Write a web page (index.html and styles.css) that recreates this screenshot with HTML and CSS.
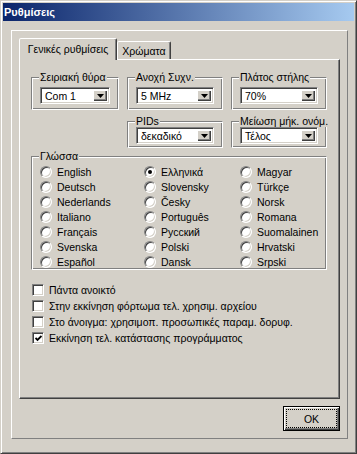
FILE: index.html
```html
<!DOCTYPE html>
<html lang="el">
<head>
    <meta charset="UTF-8">
    <meta name="viewport" content="width=device-width, initial-scale=1.0">
    <title>Ρυθμίσεις</title>
    <link rel="stylesheet" href="styles.css">
</head>
<body>
    <div class="window">
        <div class="titlebar">
            <span class="title">Ρυθμίσεις</span>
        </div>
        <div class="frame">
            <div class="tabs">
                <div class="tab tab-active">Γενικές ρυθμίσεις</div>
                <div class="tab tab-second">Χρώματα</div>
            </div>
            <div class="panel">
                <div class="group-grid">
                    <fieldset class="group">
                        <legend>Σειριακή θύρα</legend>
                        <div class="combo">
                            <span class="combo-value">Com 1</span>
                            <span class="combo-btn"><svg width="7" height="4" viewBox="0 0 7 4"><polygon points="0,0 7,0 3.5,4" fill="#000"/></svg></span>
                        </div>
                    </fieldset>
                    <fieldset class="group">
                        <legend>Ανοχή Συχν.</legend>
                        <div class="combo">
                            <span class="combo-value">5 MHz</span>
                            <span class="combo-btn"><svg width="7" height="4" viewBox="0 0 7 4"><polygon points="0,0 7,0 3.5,4" fill="#000"/></svg></span>
                        </div>
                    </fieldset>
                    <fieldset class="group">
                        <legend>Πλάτος στήλης</legend>
                        <div class="combo">
                            <span class="combo-value">70%</span>
                            <span class="combo-btn"><svg width="7" height="4" viewBox="0 0 7 4"><polygon points="0,0 7,0 3.5,4" fill="#000"/></svg></span>
                        </div>
                    </fieldset>

                    <div class="group-empty"></div>
                    <fieldset class="group group-tight">
                        <legend>PIDs</legend>
                        <div class="combo">
                            <span class="combo-value">δεκαδικό</span>
                            <span class="combo-btn"><svg width="7" height="4" viewBox="0 0 7 4"><polygon points="0,0 7,0 3.5,4" fill="#000"/></svg></span>
                        </div>
                    </fieldset>
                    <fieldset class="group group-tight">
                        <legend>Μείωση μήκ. ονόμ.</legend>
                        <div class="combo">
                            <span class="combo-value">Τέλος</span>
                            <span class="combo-btn"><svg width="7" height="4" viewBox="0 0 7 4"><polygon points="0,0 7,0 3.5,4" fill="#000"/></svg></span>
                        </div>
                    </fieldset>
                </div>

                <fieldset class="group group-lang">
                    <legend>Γλώσσα</legend>
                    <div class="lang-grid">
                        <div class="option"><span class="radio"></span>English</div>
                        <div class="option"><span class="radio"></span>Deutsch</div>
                        <div class="option"><span class="radio"></span>Nederlands</div>
                        <div class="option"><span class="radio"></span>Italiano</div>
                        <div class="option"><span class="radio"></span>Français</div>
                        <div class="option"><span class="radio"></span>Svenska</div>
                        <div class="option"><span class="radio"></span>Español</div>

                        <div class="option"><span class="radio radio-on"></span>Ελληνικά</div>
                        <div class="option"><span class="radio"></span>Slovensky</div>
                        <div class="option"><span class="radio"></span>Česky</div>
                        <div class="option"><span class="radio"></span>Português</div>
                        <div class="option"><span class="radio"></span>Русский</div>
                        <div class="option"><span class="radio"></span>Polski</div>
                        <div class="option"><span class="radio"></span>Dansk</div>

                        <div class="option"><span class="radio"></span>Magyar</div>
                        <div class="option"><span class="radio"></span>Türkçe</div>
                        <div class="option"><span class="radio"></span>Norsk</div>
                        <div class="option"><span class="radio"></span>Romana</div>
                        <div class="option"><span class="radio"></span>Suomalainen</div>
                        <div class="option"><span class="radio"></span>Hrvatski</div>
                        <div class="option"><span class="radio"></span>Srpski</div>
                    </div>
                </fieldset>

                <div class="checks">
                    <div class="option check-row"><span class="check"></span>Πάντα ανοικτό</div>
                    <div class="option check-row"><span class="check"></span>Στην εκκίνηση φόρτωμα τελ. χρησιμ. αρχείου</div>
                    <div class="option check-row"><span class="check"></span>Στο άνοιγμα: χρησιμοπ. προσωπικές παραμ. δορυφ.</div>
                    <div class="option check-row">
                        <span class="check"><svg width="7" height="7" viewBox="0 0 7 7"><polyline points="0.5,3 2.5,5 6.5,1" fill="none" stroke="#000" stroke-width="1.8"/></svg></span>
                        Εκκίνηση τελ. κατάστασης προγράμματος
                    </div>
                </div>
            </div>
            <div class="actions">
                <button type="button" class="btn-ok">OK</button>
            </div>
        </div>
    </div>
</body>
</html>
```

FILE: styles.css
```css
:root {
    --face: #d4d0c8;
    --shadow: #808080;
    --dark: #404040;
    --light: #ffffff;
    --ui-font: "Liberation Sans", Arial, sans-serif;
}

body {
    margin: 0;
    padding: 0;
    background-color: var(--face);
    font-family: var(--ui-font);
    font-size: 10.5px;
    color: #000;
}

.window {
    width: 357px;
    height: 454px;
    box-sizing: border-box;
    border: 1px solid;
    border-color: var(--face) var(--dark) var(--dark) var(--face);
    box-shadow: inset 1px 1px var(--light), inset -1px -1px var(--shadow);
    padding: 2px;
    background-color: var(--face);
    display: flex;
    flex-direction: column;
}

.titlebar {
    height: 18px;
    flex-shrink: 0;
    display: flex;
    align-items: center;
    padding-left: 1px;
    background: linear-gradient(to right, #0a246a, #a6caf0);
}

.title {
    color: var(--light);
    font-weight: bold;
    font-size: 11px;
}

.frame {
    margin: 9px 6px 0 8px;
    border: 1px solid;
    border-color: var(--light) var(--shadow) var(--shadow) var(--light);
    padding: 7px;
}

/* tab strip */
.tabs {
    display: flex;
    align-items: flex-end;
    height: 22px;
    margin-bottom: -1px;
    position: relative;
    z-index: 1;
}

.tab {
    box-sizing: border-box;
    display: flex;
    align-items: center;
    justify-content: center;
    border: 1px solid;
    border-bottom: none;
    border-color: var(--light) var(--dark) transparent var(--light);
    border-radius: 2px 2px 0 0;
    box-shadow: inset -1px 0 var(--shadow);
    background-color: var(--face);
    white-space: nowrap;
}

.tab-active {
    width: 98px;
    height: 22px;
    padding-bottom: 1px;
}

.tab-second {
    width: 54px;
    height: 18px;
    margin-bottom: 1px;
}

.panel {
    box-sizing: border-box;
    height: 340px;
    border: 1px solid;
    border-color: var(--light) var(--dark) var(--dark) var(--light);
    box-shadow: inset -1px -1px var(--shadow);
    padding: 11px 12px 0 11px;
}

/* group boxes */
.group-grid {
    display: grid;
    grid-template-columns: 88px 96px 96px;
    column-gap: 8px;
    row-gap: 5px;
}

.group {
    margin: 0;
    min-width: 0;
    border: 1px solid;
    border-color: var(--shadow) var(--light) var(--light) var(--shadow);
    box-shadow: inset 1px 1px var(--light), inset -1px -1px var(--shadow);
    padding: 4px 8px 5px 8px;
}

.group legend {
    padding: 0 1px;
    margin-left: -1px;
    line-height: 12px;
    white-space: nowrap;
    background-color: var(--face);
}

.group-tight {
    padding-top: 0;
    padding-bottom: 3px;
}

.combo {
    box-sizing: border-box;
    height: 17px;
    display: flex;
    align-items: stretch;
    padding: 2px;
    border: 1px solid;
    border-color: var(--shadow) var(--light) var(--light) var(--shadow);
    box-shadow: inset 1px 1px var(--dark), inset -1px -1px var(--face);
    background-color: var(--light);
}

.combo-value {
    flex: 1;
    display: flex;
    align-items: center;
    padding-left: 2px;
    white-space: nowrap;
    overflow: hidden;
}

.combo-btn {
    width: 14px;
    display: flex;
    align-items: center;
    justify-content: center;
    background-color: var(--face);
    box-shadow: inset 1px 1px var(--light), inset -1px -1px var(--dark), inset -2px -2px var(--shadow);
}

/* language radios */
.group-lang {
    margin-top: 2px;
    padding: 2px 8px 0 8px;
}

.lang-grid {
    display: grid;
    grid-template-columns: 104px 96px 1fr;
    grid-template-rows: repeat(7, 15px);
    grid-auto-flow: column;
}

.option {
    display: flex;
    align-items: center;
    gap: 5px;
    white-space: nowrap;
}

.radio {
    box-sizing: border-box;
    width: 12px;
    height: 12px;
    flex-shrink: 0;
    border-radius: 50%;
    border: 1px solid;
    border-color: var(--shadow) var(--light) var(--light) var(--shadow);
    box-shadow: inset 1px 1px var(--dark), inset -1px -1px var(--face);
    background-color: var(--light);
    display: flex;
    align-items: center;
    justify-content: center;
}

.radio-on::after {
    content: "";
    width: 4px;
    height: 4px;
    border-radius: 50%;
    background-color: #000;
}

/* check boxes */
.checks {
    margin-top: 12px;
    padding-left: 1px;
}

.check-row {
    height: 16px;
}

.check {
    box-sizing: border-box;
    width: 12px;
    height: 12px;
    flex-shrink: 0;
    border: 1px solid;
    border-color: var(--shadow) var(--light) var(--light) var(--shadow);
    box-shadow: inset 1px 1px var(--dark), inset -1px -1px var(--face);
    background-color: var(--light);
    display: flex;
    align-items: center;
    justify-content: center;
}

.actions {
    display: flex;
    justify-content: flex-end;
    margin-top: 7px;
}

.btn-ok {
    width: 57px;
    height: 25px;
    padding: 0;
    border: 1px solid #000;
    background-color: var(--face);
    box-shadow: inset 1px 1px var(--light), inset -1px -1px var(--dark), inset -2px -2px var(--shadow);
    outline: 1px dotted #000;
    outline-offset: -4px;
    font-family: var(--ui-font);
    font-size: 10.5px;
    color: #000;
}
```
